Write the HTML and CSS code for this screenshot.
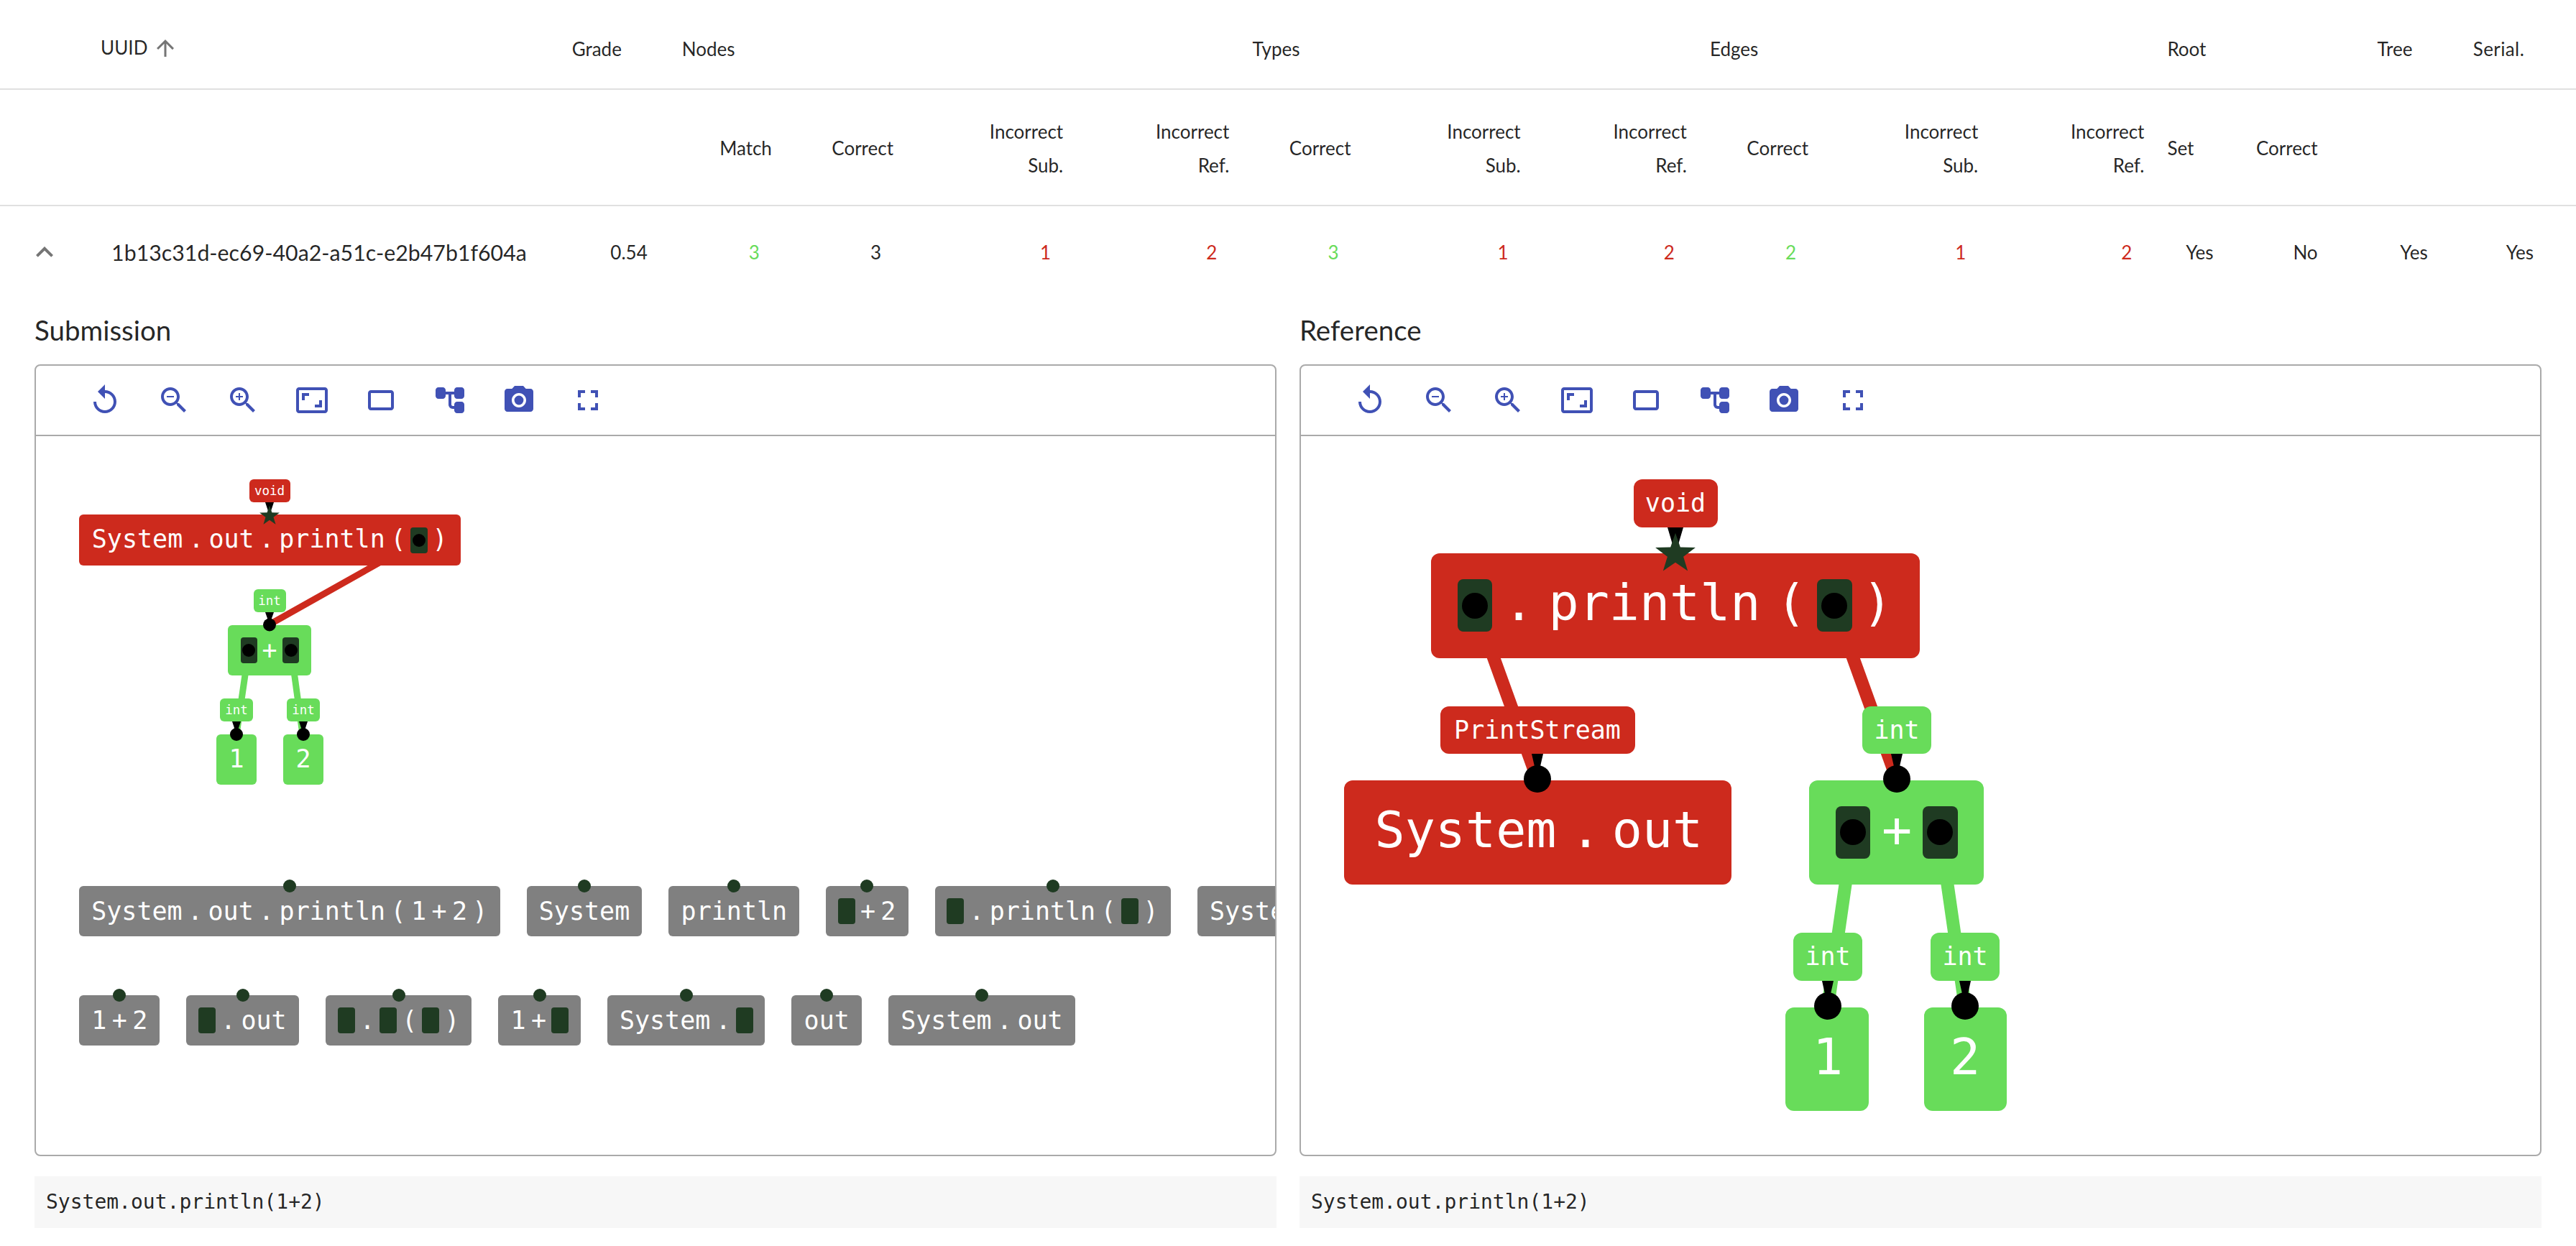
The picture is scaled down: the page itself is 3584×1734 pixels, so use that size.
FILE: index.html
```html
<!DOCTYPE html>
<html>
<head>
    <title>Grading results</title>
    <link rel="stylesheet" href="styles.css">
</head>
<body>
    <table class="results">
        <colgroup>
            <col class="c-toggle"><col class="c-uuid"><col class="c-grade">
            <col class="c-match"><col class="c-correct"><col class="c-sub"><col class="c-ref">
            <col class="c-correct"><col class="c-sub"><col class="c-ref">
            <col class="c-correct"><col class="c-sub"><col class="c-ref">
            <col class="c-set"><col class="c-rootok"><col class="c-tree"><col class="c-serial">
        </colgroup>
        <thead>
            <tr class="head-top">
                <th></th>
                <th class="left uuid-head">UUID <svg class="sort-icon" viewBox="0 0 24 24"><path d="M4 12l1.41 1.41L11 7.83V20h2V7.83l5.58 5.59L20 12l-8-8-8 8z"/></svg></th>
                <th class="left">Grade</th>
                <th class="left" colspan="4">Nodes</th>
                <th class="left" colspan="3">Types</th>
                <th class="left" colspan="3">Edges</th>
                <th class="left" colspan="2">Root</th>
                <th class="left tree-head">Tree</th>
                <th class="left serial-head">Serial.</th>
            </tr>
            <tr class="head-sub">
                <th colspan="3"></th>
                <th>Match</th>
                <th>Correct</th>
                <th>Incorrect<br>Sub.</th>
                <th>Incorrect<br>Ref.</th>
                <th>Correct</th>
                <th>Incorrect<br>Sub.</th>
                <th>Incorrect<br>Ref.</th>
                <th>Correct</th>
                <th>Incorrect<br>Sub.</th>
                <th>Incorrect<br>Ref.</th>
                <th class="left">Set</th>
                <th>Correct</th>
                <th colspan="2"></th>
            </tr>
        </thead>
        <tbody>
            <tr class="row">
                <td class="toggle"><svg class="chevron" viewBox="0 0 24 24"><path d="M12 8l-6 6 1.41 1.41L12 10.83l4.59 4.58L18 14z"/></svg></td>
                <td class="left uuid">1b13c31d-ec69-40a2-a51c-e2b47b1f604a</td>
                <td class="grade">0.54</td>
                <td class="good">3</td>
                <td>3</td>
                <td class="bad">1</td>
                <td class="bad">2</td>
                <td class="good">3</td>
                <td class="bad">1</td>
                <td class="bad">2</td>
                <td class="good">2</td>
                <td class="bad">1</td>
                <td class="bad">2</td>
                <td class="set">Yes</td>
                <td class="rootok">No</td>
                <td class="rootok">Yes</td>
                <td class="serial">Yes</td>
            </tr>
        </tbody>
    </table>

    <div class="detail">
        <section class="pane">
            <h3>Submission</h3>
            <div class="box">
                <div class="toolbar">
                    <svg viewBox="0 0 24 24"><path d="M12 5V1L7 6l5 5V7c3.31 0 6 2.69 6 6s-2.69 6-6 6-6-2.69-6-6H4c0 4.42 3.58 8 8 8s8-3.58 8-8-3.58-8-8-8z"/></svg>
                    <svg viewBox="0 0 24 24"><path d="M15.5 14h-.79l-.28-.27C15.41 12.59 16 11.11 16 9.5 16 5.91 13.09 3 9.5 3S3 5.91 3 9.5 5.91 16 9.5 16c1.61 0 3.09-.59 4.23-1.57l.27.28v.79l5 4.99L20.49 19l-4.99-5zm-6 0C7.01 14 5 11.99 5 9.5S7.01 5 9.5 5 14 7.01 14 9.5 11.99 14 9.5 14zM7 9h5v1H7z"/></svg>
                    <svg viewBox="0 0 24 24"><path d="M15.5 14h-.79l-.28-.27C15.41 12.59 16 11.11 16 9.5 16 5.91 13.09 3 9.5 3S3 5.91 3 9.5 5.91 16 9.5 16c1.61 0 3.09-.59 4.23-1.57l.27.28v.79l5 4.99L20.49 19l-4.99-5zm-6 0C7.01 14 5 11.99 5 9.5S7.01 5 9.5 5 14 7.01 14 9.5 11.99 14 9.5 14zM12 10h-2v2H9v-2H7V9h2V7h1v2h2v1z"/></svg>
                    <svg viewBox="0 0 24 24"><path d="M19 12h-2v3h-3v2h5v-5zM7 9h3V7H5v5h2V9zm14-6H3c-1.1 0-2 .9-2 2v14c0 1.1.9 2 2 2h18c1.1 0 2-.9 2-2V5c0-1.1-.9-2-2-2zm0 16.01H3V4.99h18v14.02z"/></svg>
                    <svg viewBox="0 0 24 24"><path d="M19 5H5c-1.1 0-2 .9-2 2v10c0 1.1.9 2 2 2h14c1.1 0 2-.9 2-2V7c0-1.1-.9-2-2-2zm0 12H5V7h14v10z"/></svg>
                    <svg viewBox="0 0 24 24"><path d="M17 11h3c1.11 0 2-.9 2-2V5c0-1.11-.9-2-2-2h-3c-1.11 0-2 .9-2 2v1H9.01V5c0-1.11-.9-2-2-2H4c-1.1 0-2 .9-2 2v4c0 1.11.9 2 2 2h3c1.11 0 2-.9 2-2V8h2v7.01c0 1.65 1.34 2.99 2.99 2.99H15v1c0 1.11.9 2 2 2h3c1.11 0 2-.9 2-2v-4c0-1.11-.9-2-2-2h-3c-1.11 0-2 .9-2 2v1h-1.01c-.54 0-.99-.45-.99-.99V8h2v1c0 1.1.9 2 2 2z"/></svg>
                    <svg viewBox="0 0 24 24"><circle cx="12" cy="12" r="3.2"/><path d="M9 2L7.17 4H4c-1.1 0-2 .9-2 2v12c0 1.1.9 2 2 2h16c1.1 0 2-.9 2-2V6c0-1.1-.9-2-2-2h-3.17L15 2H9zm3 15c-2.76 0-5-2.24-5-5s2.24-5 5-5 5 2.24 5 5-2.24 5-5 5z"/></svg>
                    <svg viewBox="0 0 24 24"><path d="M7 14H5v5h5v-2H7v-3zm-2-4h2V7h3V5H5v5zm12 7h-3v2h5v-5h-2v3zM14 5v2h3v3h2V5h-5z"/></svg>
                </div>
                <div class="canvas">
                    <svg class="graph graph-sub" viewBox="50 606 1724 626">
                        <line class="edge-red thin" x1="583" y1="751" x2="375" y2="868"/>
                        <line class="edge-green thin" x1="346" y1="904" x2="329" y2="1021"/>
                        <line class="edge-green thin" x1="405" y1="904" x2="421" y2="1021"/>

                        <rect class="red" x="110" y="715" width="531" height="71" rx="6"/>
                        <text class="md" x="191" y="761">System</text>
                        <text class="md" x="273" y="761">.</text>
                        <text class="md" x="322" y="761">out</text>
                        <text class="md" x="371" y="761">.</text>
                        <text class="md" x="462" y="761">println</text>
                        <text class="md" x="554" y="761">(</text>
                        <rect class="slot" x="571" y="733" width="24" height="36" rx="4"/>
                        <circle class="dot" cx="583" cy="751" r="9"/>
                        <text class="md" x="612" y="761">)</text>

                        <rect class="red" x="347" y="666" width="57" height="32" rx="6"/>
                        <text class="sm" x="375" y="688">void</text>
                        <polygon class="dot" points="369,698 381,698 375,716"/>
                        <polygon class="star" transform="translate(375 717) scale(.97)" points="0,-15 3.5,-4.9 14.3,-4.6 5.7,1.9 8.8,12.1 0,6 -8.8,12.1 -5.7,1.9 -14.3,-4.6 -3.5,-4.9"/>

                        <rect class="green" x="317" y="869" width="116" height="70" rx="6"/>
                        <rect class="slot" x="335" y="886" width="23" height="36" rx="4"/>
                        <circle class="dot" cx="346" cy="904" r="9"/>
                        <text class="md" x="375" y="916">+</text>
                        <rect class="slot" x="393" y="886" width="23" height="36" rx="4"/>
                        <circle class="dot" cx="405" cy="904" r="9"/>

                        <rect class="green" x="353" y="819" width="45" height="32" rx="6"/>
                        <text class="sm" x="375" y="841">int</text>
                        <polygon class="dot" points="369,851 381,851 375,868"/>
                        <circle class="dot" cx="375" cy="868.5" r="9"/>

                        <rect class="green" x="301" y="1021" width="56" height="70" rx="6"/>
                        <text class="md" x="329" y="1067">1</text>
                        <rect class="green" x="394" y="1021" width="56" height="70" rx="6"/>
                        <text class="md" x="422" y="1067">2</text>

                        <rect class="green" x="306" y="971" width="46" height="32" rx="6"/>
                        <text class="sm" x="329" y="993">int</text>
                        <polygon class="dot" points="323,1003 335,1003 329,1021"/>
                        <circle class="dot" cx="329" cy="1021" r="9"/>
                        <rect class="green" x="399" y="971" width="46" height="32" rx="6"/>
                        <text class="sm" x="422" y="993">int</text>
                        <polygon class="dot" points="416,1003 428,1003 422,1021"/>
                        <circle class="dot" cx="422" cy="1021" r="9"/>
                    </svg>
                    <div class="palette">
                        <div class="palette-row">
                            <div class="tnode"><span>System</span><span>.</span><span>out</span><span>.</span><span>println</span><span>(</span><span>1</span><span>+</span><span>2</span><span>)</span></div>
                            <div class="tnode"><span>System</span></div>
                            <div class="tnode"><span>println</span></div>
                            <div class="tnode"><i class="hole"></i><span>+</span><span>2</span></div>
                            <div class="tnode"><i class="hole"></i><span>.</span><span>println</span><span>(</span><i class="hole"></i><span>)</span></div>
                            <div class="tnode"><span>System</span><span>.</span><span>out</span></div>
                        </div>
                        <div class="palette-row">
                            <div class="tnode"><span>1</span><span>+</span><span>2</span></div>
                            <div class="tnode"><i class="hole"></i><span>.</span><span>out</span></div>
                            <div class="tnode"><i class="hole"></i><span>.</span><i class="hole"></i><span>(</span><i class="hole"></i><span>)</span></div>
                            <div class="tnode"><span>1</span><span>+</span><i class="hole"></i></div>
                            <div class="tnode"><span>System</span><span>.</span><i class="hole"></i></div>
                            <div class="tnode"><span>out</span></div>
                            <div class="tnode"><span>System</span><span>.</span><span>out</span></div>
                        </div>
                    </div>
                </div>
            </div>
            <pre class="code">System.out.println(1+2)</pre>
        </section>

        <section class="pane">
            <h3>Reference</h3>
            <div class="box">
                <div class="toolbar">
                    <svg viewBox="0 0 24 24"><path d="M12 5V1L7 6l5 5V7c3.31 0 6 2.69 6 6s-2.69 6-6 6-6-2.69-6-6H4c0 4.42 3.58 8 8 8s8-3.58 8-8-3.58-8-8-8z"/></svg>
                    <svg viewBox="0 0 24 24"><path d="M15.5 14h-.79l-.28-.27C15.41 12.59 16 11.11 16 9.5 16 5.91 13.09 3 9.5 3S3 5.91 3 9.5 5.91 16 9.5 16c1.61 0 3.09-.59 4.23-1.57l.27.28v.79l5 4.99L20.49 19l-4.99-5zm-6 0C7.01 14 5 11.99 5 9.5S7.01 5 9.5 5 14 7.01 14 9.5 11.99 14 9.5 14zM7 9h5v1H7z"/></svg>
                    <svg viewBox="0 0 24 24"><path d="M15.5 14h-.79l-.28-.27C15.41 12.59 16 11.11 16 9.5 16 5.91 13.09 3 9.5 3S3 5.91 3 9.5 5.91 16 9.5 16c1.61 0 3.09-.59 4.23-1.57l.27.28v.79l5 4.99L20.49 19l-4.99-5zm-6 0C7.01 14 5 11.99 5 9.5S7.01 5 9.5 5 14 7.01 14 9.5 11.99 14 9.5 14zM12 10h-2v2H9v-2H7V9h2V7h1v2h2v1z"/></svg>
                    <svg viewBox="0 0 24 24"><path d="M19 12h-2v3h-3v2h5v-5zM7 9h3V7H5v5h2V9zm14-6H3c-1.1 0-2 .9-2 2v14c0 1.1.9 2 2 2h18c1.1 0 2-.9 2-2V5c0-1.1-.9-2-2-2zm0 16.01H3V4.99h18v14.02z"/></svg>
                    <svg viewBox="0 0 24 24"><path d="M19 5H5c-1.1 0-2 .9-2 2v10c0 1.1.9 2 2 2h14c1.1 0 2-.9 2-2V7c0-1.1-.9-2-2-2zm0 12H5V7h14v10z"/></svg>
                    <svg viewBox="0 0 24 24"><path d="M17 11h3c1.11 0 2-.9 2-2V5c0-1.11-.9-2-2-2h-3c-1.11 0-2 .9-2 2v1H9.01V5c0-1.11-.9-2-2-2H4c-1.1 0-2 .9-2 2v4c0 1.11.9 2 2 2h3c1.11 0 2-.9 2-2V8h2v7.01c0 1.65 1.34 2.99 2.99 2.99H15v1c0 1.11.9 2 2 2h3c1.11 0 2-.9 2-2v-4c0-1.11-.9-2-2-2h-3c-1.11 0-2 .9-2 2v1h-1.01c-.54 0-.99-.45-.99-.99V8h2v1c0 1.1.9 2 2 2z"/></svg>
                    <svg viewBox="0 0 24 24"><circle cx="12" cy="12" r="3.2"/><path d="M9 2L7.17 4H4c-1.1 0-2 .9-2 2v12c0 1.1.9 2 2 2h16c1.1 0 2-.9 2-2V6c0-1.1-.9-2-2-2h-3.17L15 2H9zm3 15c-2.76 0-5-2.24-5-5s2.24-5 5-5 5 2.24 5 5-2.24 5-5 5z"/></svg>
                    <svg viewBox="0 0 24 24"><path d="M7 14H5v5h5v-2H7v-3zm-2-4h2V7h3V5H5v5zm12 7h-3v2h5v-5h-2v3zM14 5v2h3v3h2V5h-5z"/></svg>
                </div>
                <div class="canvas">
                    <svg class="graph graph-ref" viewBox="1810 606 1724 1000">
                        <line class="edge-red" x1="2052" y1="842" x2="2139" y2="1083"/>
                        <line class="edge-red" x1="2552" y1="842" x2="2639" y2="1083"/>
                        <line class="edge-green" x1="2578" y1="1157" x2="2543" y2="1400"/>
                        <line class="edge-green" x1="2699" y1="1157" x2="2734" y2="1400"/>

                        <rect class="red" x="1991" y="769" width="680" height="146" rx="12"/>
                        <rect class="slot" x="2028" y="805" width="48" height="73" rx="8"/>
                        <circle class="dot" cx="2052" cy="842" r="18"/>
                        <text class="lg" x="2113" y="862">.</text>
                        <text class="lg" x="2302" y="862">println</text>
                        <text class="lg" x="2492" y="862">(</text>
                        <rect class="slot" x="2528" y="805" width="49" height="73" rx="8"/>
                        <circle class="dot" cx="2552" cy="842" r="18"/>
                        <text class="lg" x="2612" y="862">)</text>

                        <rect class="red" x="2273" y="666" width="117" height="67" rx="12"/>
                        <text class="md" x="2331" y="711">void</text>
                        <polygon class="dot" points="2320,733 2342,733 2331,770"/>
                        <polygon class="star" transform="translate(2331 770) scale(1.95)" points="0,-15 3.5,-4.9 14.3,-4.6 5.7,1.9 8.8,12.1 0,6 -8.8,12.1 -5.7,1.9 -14.3,-4.6 -3.5,-4.9"/>

                        <rect class="red" x="1870" y="1085" width="539" height="145" rx="12"/>
                        <text class="lg" x="2039" y="1178">System</text>
                        <text class="lg" x="2206" y="1178">.</text>
                        <text class="lg" x="2306" y="1178">out</text>

                        <rect class="red" x="2004" y="982" width="271" height="66" rx="12"/>
                        <text class="md" x="2139" y="1027">PrintStream</text>
                        <polygon class="dot" points="2131,1048 2147,1048 2139,1083"/>
                        <circle class="dot" cx="2139" cy="1083" r="19"/>

                        <rect class="green" x="2517" y="1085" width="243" height="145" rx="12"/>
                        <rect class="slot" x="2554" y="1121" width="48" height="73" rx="8"/>
                        <circle class="dot" cx="2578" cy="1157" r="18"/>
                        <text class="lg" x="2639" y="1178">+</text>
                        <rect class="slot" x="2675" y="1121" width="49" height="73" rx="8"/>
                        <circle class="dot" cx="2699" cy="1157" r="18"/>

                        <rect class="green" x="2591" y="982" width="96" height="66" rx="12"/>
                        <text class="md" x="2639" y="1027">int</text>
                        <polygon class="dot" points="2631,1048 2647,1048 2639,1083"/>
                        <circle class="dot" cx="2639" cy="1083" r="19"/>

                        <rect class="green" x="2484" y="1401" width="116" height="144" rx="12"/>
                        <text class="lg" x="2543" y="1494">1</text>
                        <rect class="green" x="2677" y="1401" width="115" height="144" rx="12"/>
                        <text class="lg" x="2734" y="1494">2</text>

                        <rect class="green" x="2495" y="1297" width="96" height="67" rx="12"/>
                        <text class="md" x="2543" y="1342">int</text>
                        <polygon class="dot" points="2535,1364 2551,1364 2543,1400"/>
                        <circle class="dot" cx="2543" cy="1399" r="19"/>
                        <rect class="green" x="2686" y="1297" width="96" height="67" rx="12"/>
                        <text class="md" x="2734" y="1342">int</text>
                        <polygon class="dot" points="2726,1364 2742,1364 2734,1400"/>
                        <circle class="dot" cx="2734" cy="1399" r="19"/>
                    </svg>
                </div>
            </div>
            <pre class="code">System.out.println(1+2)</pre>
        </section>
    </div>
</body>
</html>
```

FILE: styles.css
```css
body { margin: 0; font-family: Lato, "Noto Sans", sans-serif; color: rgba(0, 0, 0, .87); background: #fff; }

.results { width: 3584px; table-layout: fixed; border-collapse: collapse; font-size: 26px; }
.c-toggle { width: 140px; }
.c-uuid { width: 640px; }
.c-grade { width: 153px; }
.c-match { width: 157px; }
.c-correct { width: 169px; }
.c-sub { width: 236px; }
.c-ref { width: 231px; }
.c-set { width: 109px; }
.c-rootok { width: 132px; }
.c-tree { width: 153px; }
.c-serial { width: 189px; }

th, td { padding: 0 17px 0 0; text-align: right; font-weight: 400; }
th.left { text-align: left; padding: 0 0 0 15px; }
.head-top th { height: 124px; padding-top: 12px; border-bottom: 2px solid #e0e0e0; box-sizing: border-box; }
.head-sub th { height: 162px; padding-top: 3px; line-height: 47px; border-bottom: 2px solid #e0e0e0; box-sizing: border-box; }
.uuid-head.left { padding-left: 0; }
.sort-icon { width: 36px; height: 36px; fill: #757575; vertical-align: middle; margin: -4px 0 0 0; }
.tree-head.left { padding-left: 66px; }
.serial-head.left { padding-left: 46px; letter-spacing: .4px; }

.row td { height: 128px; padding-right: 34px; }
.row .toggle { padding: 0 0 0 38px; text-align: left; }
.chevron { display: block; width: 48px; height: 48px; fill: #757575; }
.row .uuid { padding: 0 0 0 15px; text-align: left; font-size: 30.3px; }
.row .grade { padding-right: 33px; }
.row .set { padding-right: 30px; }
.row .rootok { padding-right: 17px; }
.row .serial { padding-right: 59px; }
.good { color: #68dc5a; }
.bad { color: #cd2a1d; }

.detail { display: flex; gap: 32px; padding: 18px 48px 0; }
.pane { flex: 1; min-width: 0; }
h3 { margin: 0 0 22px; font-size: 38.5px; font-weight: 400; line-height: 52px; }

.box { border: 2px solid #aaa; border-radius: 8px; overflow: hidden; }
.toolbar { display: flex; align-items: center; gap: 48px; height: 96px; padding-left: 72px; border-bottom: 2px solid #aaa; }
.toolbar svg { width: 48px; height: 48px; fill: #4051b5; }

.canvas { height: 1000px; overflow: hidden; }
.graph { display: block; width: 1724px; }
.graph-sub { height: 626px; }
.graph-ref { height: 1000px; }

.graph text { fill: #fff; text-anchor: middle; font-family: "DejaVu Sans Mono", monospace; }
.graph .lg { font-size: 70px; }
.graph .md { font-size: 35px; }
.graph .sm { font-size: 17.5px; }
.graph .red { fill: #cd2a1d; }
.graph .green { fill: #68dc5a; }
.graph .slot { fill: #1f3b22; }
.graph .dot { fill: #000; }
.graph .star { fill: #1f3b22; }
.edge-red { stroke: #cd2a1d; stroke-width: 18; }
.edge-green { stroke: #68dc5a; stroke-width: 18; }
.thin { stroke-width: 9; }

.palette { display: flex; flex-direction: column; gap: 82px; padding-left: 60px; }
.palette-row { display: flex; gap: 37px; }
.tnode { position: relative; flex: none; display: flex; align-items: center; gap: 7.4px; height: 70px; padding: 0 17.2px; border-radius: 6px; background: #808080; color: #fff; font-family: "DejaVu Sans Mono", monospace; font-size: 35px; }
.tnode::before { content: ""; position: absolute; top: -9px; left: 50%; width: 18px; height: 18px; margin-left: -9px; border-radius: 50%; background: #1f3b22; }
.hole { width: 24px; height: 36px; margin: 0 -.5px; border-radius: 4px; background: #1f3b22; }

.code { margin: 28px 0 0; height: 72px; padding-left: 16px; background: #f7f7f7; font-family: "DejaVu Sans Mono", monospace; font-size: 28px; line-height: 72px; }
```
